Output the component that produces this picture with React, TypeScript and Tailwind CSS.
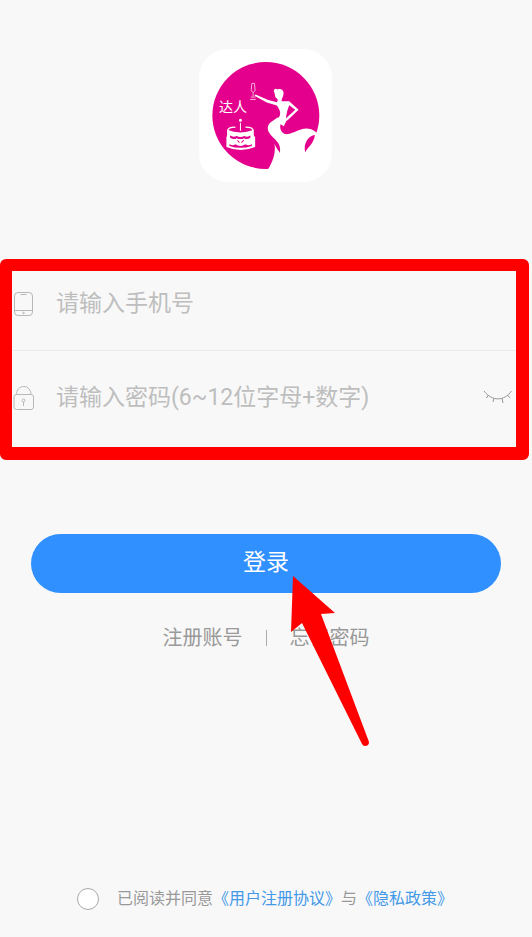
import { useState } from "react";
import type { FormEvent } from "react";

// ----------------------------- icons -----------------------------
function Logo() {
  return (
    <svg viewBox="21 21 398 398" className="size-[133px]" role="img" aria-label="达人">
      <rect x="21" y="21" width="398" height="398" rx="86" fill="#fff" />
      <circle cx="221" cy="220" r="160" fill="#e4008c" />
      {/* 裙摆 */}
      <path
        d="M256 226C246 234 230 240 227 254C224 272 242 284 253 296C264 308 265 320 263 332C260 324 252 320 247 304C252 334 240 362 226 384L300 400L390 330L384 290C378 268 352 252 326 262C304 270 286 280 275 274C266 268 262 256 265 246L275 252L286 228Z"
        fill="#fff"
      />
      <path d="M368 278C348 280 332 304 339 330C344 316 364 306 368 278Z" fill="#e4008c" />
      {/* 人物 */}
      <path
        d="M245 148C244 140 251 138 256 142C266 137 276 145 274 156C273 164 269 168 268 177L291 177L319 203L286 234L276 238L284 226L309 203L291 189C286 202 282 214 281 232L256 232C264 222 266 212 262 204C259 198 257 194 254 190L224 181L187 161L190 157L226 173L254 180C258 176 258 170 251 167C247 162 249 154 245 148Z"
        fill="#fff"
      />
      {/* 酒杯 */}
      <path d="M179 124H187L189 146L183 151L177 146ZM183 151V163M176 165H190M174 172H191" fill="none" stroke="#fff" strokeWidth="2" />
      {/* 蛋糕 */}
      <g fill="none" stroke="#fff" strokeWidth="4">
        <circle cx="145" cy="234" r="2.5" />
        <path d="M145 242V266" strokeWidth="3" />
        <path d="M130 255C112 255 107 260 107 266M160 255C178 255 183 260 183 266" />
      </g>
      <path d="M105 263Q145 278 185 263V279L189 286V314Q145 332 103 314V286L105 279Z" fill="#fff" />
      <path
        d="M114 280Q124 286 134 281Q145 287 156 281Q166 286 175 280V286Q166 294 156 288Q145 293 134 288Q124 294 114 286ZM112 305Q121 312 130 306Q145 316 160 306Q170 312 179 305V311Q145 322 112 311Z"
        fill="#e4008c"
      />
      <path d="M136 294L142 301M155 294L148 301" fill="none" stroke="#e4008c" strokeWidth="3" />
      <text x="81" y="210" fontSize="42" fill="#fff" className="font-['Noto_Sans_CJK_SC',sans-serif]">
        达人
      </text>
    </svg>
  );
}

function PhoneIcon() {
  return (
    <svg viewBox="0 0 22 26" className="h-[26px] w-[22px] shrink-0" fill="none" stroke="#b8b8b8" aria-hidden="true">
      <rect x="1.5" y="1.5" width="18" height="23" rx="3.5" />
      <path d="M2 19.5H19M7.5 3.5H13.5" />
      <circle cx="10.5" cy="22" r="0.8" />
    </svg>
  );
}

function LockIcon() {
  return (
    <svg viewBox="0 0 22 26" className="h-[26px] w-[22px] shrink-0" fill="none" stroke="#b8b8b8" aria-hidden="true">
      <rect x="1" y="9.5" width="19.5" height="15" rx="2.5" />
      <path d="M3.5 9.5C3.5 5 6.5 1.5 10.75 1.5S18 5 18 9.5M10.5 17V21" />
      <circle cx="10.5" cy="15.5" r="1.5" />
    </svg>
  );
}

function ClosedEyeIcon() {
  return (
    <svg viewBox="0 0 30 16" className="h-4 w-[30px]" fill="none" stroke="#9a9a9a" aria-hidden="true">
      <path d="M1 2C9 12.5 21 12.5 28.5 2M5.5 6L3.5 9M11 9L10 13M19 9L20 14M24.5 6L27 9" />
    </svg>
  );
}

const fieldClass =
  "ml-[21px] min-w-0 flex-1 bg-transparent text-[23px] leading-8 text-gray-700 placeholder:text-[#bebebe] placeholder:opacity-100 focus:outline-none";

export default function App() {
  const [phone, setPhone] = useState("");
  const [password, setPassword] = useState("");
  const [showPassword, setShowPassword] = useState(false);
  const [agreed, setAgreed] = useState(false);

  const handleSubmit = (e: FormEvent) => {
    e.preventDefault();
  };

  // ----------------------------- render -----------------------------
  return (
    <main className="flex min-h-screen flex-col overflow-x-hidden bg-[#f8f8f8] font-[Roboto,'Noto_Sans_CJK_SC',sans-serif]">
      <header className="flex justify-center pt-[49px] pr-0.5">
        <Logo />
      </header>

      <form onSubmit={handleSubmit} className="mt-[77px]">
        {/* 输入区域，红框标注 */}
        <div className="relative pt-3 pr-4 pb-[13px] pl-[13px]">
          <div className="flex h-20 items-center border-b border-[#ebebeb] pb-3.5">
            <label htmlFor="phone" aria-label="手机号">
              <PhoneIcon />
            </label>
            <input
              id="phone"
              type="tel"
              value={phone}
              onChange={(e) => setPhone(e.target.value)}
              placeholder="请输入手机号"
              className={fieldClass}
            />
          </div>
          <div className="flex h-24 items-center pb-0.5">
            <label htmlFor="password" aria-label="密码">
              <LockIcon />
            </label>
            <input
              id="password"
              type={showPassword ? "text" : "password"}
              value={password}
              onChange={(e) => setPassword(e.target.value)}
              placeholder="请输入密码(6~12位字母+数字)"
              className={fieldClass}
            />
            <button type="button" aria-label="显示密码" onClick={() => setShowPassword(!showPassword)} className="pr-[3px] pb-0.5">
              <ClosedEyeIcon />
            </button>
          </div>
          <div className="pointer-events-none absolute inset-y-0 right-[3px] left-0 rounded-md border-12 border-r-[13px] border-b-[13px] border-[#ff0000]" />
        </div>

        <div className="relative mt-[74px] px-[31px]">
          <button type="submit" className="h-[59px] w-full rounded-full bg-[#3190ff] text-[23px] text-white">
            登录
          </button>
          <div className="mt-[29px] flex items-center justify-center gap-[23px] text-[20px] leading-8 text-[#999]">
            <a href="#register">注册账号</a>
            <span className="h-4 w-px bg-[#aaa]" />
            <a href="#forgot">忘记密码</a>
          </div>
          {/* 指向登录按钮的箭头 */}
          <svg
            viewBox="0 0 80 172"
            className="pointer-events-none absolute top-[41px] left-1/2 ml-[24px] h-[172px] w-20"
            fill="#ff0000"
            aria-hidden="true"
          >
            <path d="M3 1L45 38L31 39L79 167Q79 171 75 171Q73 171 72 169L12 48L1 57Z" />
          </svg>
        </div>
      </form>

      <footer className="mt-auto flex items-center justify-center pr-0.5 pb-[26px] text-[16px] leading-6 text-[#999]">
        <input
          id="agree"
          type="checkbox"
          checked={agreed}
          onChange={(e) => setAgreed(e.target.checked)}
          className="mr-[18px] size-[22px] shrink-0 appearance-none rounded-full border border-[#aaa] bg-white checked:bg-[#3190ff]"
        />
        <p className="whitespace-nowrap">
          <label htmlFor="agree">已阅读并同意</label>
          <a href="#agreement" className="text-[#4398e8]">《用户注册协议》</a>
          与
          <a href="#privacy" className="text-[#4398e8]">《隐私政策》</a>
        </p>
      </footer>
    </main>
  );
}
